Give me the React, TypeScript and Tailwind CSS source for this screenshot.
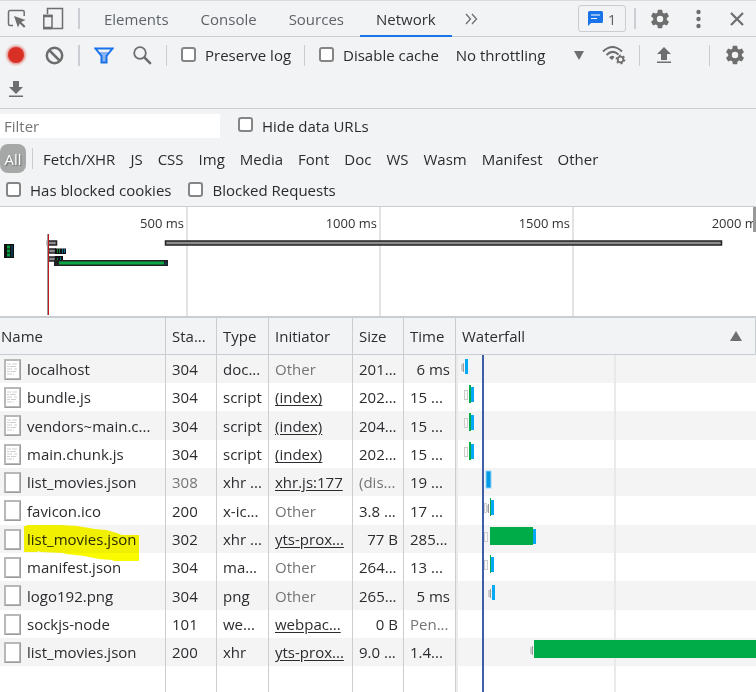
import { clsx } from 'clsx';

type Bar = { kind: 'queue' | 'stall' | 'wait' | 'load' | 'fetch'; x: number; w: number };

interface RequestRow {
  name: string;
  status: string;
  type: string;
  initiator: string;
  size: string;
  time: string;
  text?: boolean;
  muted?: boolean;
  marked?: boolean;
  bars: Bar[];
}

const scriptBars: Bar[] = [
  { kind: 'queue', x: 8, w: 4 },
  { kind: 'load', x: 14, w: 4 },
  { kind: 'wait', x: 13, w: 2 },
];

const requests: RequestRow[] = [
  {
    name: 'localhost', status: '304', type: 'doc...', initiator: 'Other', size: '201...', time: '6 ms', text: true,
    bars: [{ kind: 'stall', x: 5, w: 3 }, { kind: 'load', x: 9, w: 3 }],
  },
  { name: 'bundle.js', status: '304', type: 'script', initiator: '(index)', size: '202...', time: '15 ...', text: true, bars: scriptBars },
  { name: 'vendors~main.c...', status: '304', type: 'script', initiator: '(index)', size: '204...', time: '15 ...', text: true, bars: scriptBars },
  { name: 'main.chunk.js', status: '304', type: 'script', initiator: '(index)', size: '202...', time: '15 ...', text: true, bars: scriptBars },
  {
    name: 'list_movies.json', status: '308', type: 'xhr ...', initiator: 'xhr.js:177', size: '(dis...', time: '19 ...', muted: true,
    bars: [{ kind: 'fetch', x: 30, w: 5 }],
  },
  {
    name: 'favicon.ico', status: '200', type: 'x-ic...', initiator: 'Other', size: '3.8 ...', time: '17 ...',
    bars: [{ kind: 'queue', x: 28, w: 3 }, { kind: 'stall', x: 31, w: 2 }, { kind: 'load', x: 35, w: 3 }, { kind: 'wait', x: 34, w: 1 }],
  },
  {
    name: 'list_movies.json', status: '302', type: 'xhr ...', initiator: 'yts-prox...', size: '77 B', time: '285...', marked: true,
    bars: [{ kind: 'queue', x: 28, w: 4 }, { kind: 'load', x: 77, w: 3 }, { kind: 'wait', x: 34, w: 43 }],
  },
  {
    name: 'manifest.json', status: '304', type: 'ma...', initiator: 'Other', size: '264...', time: '13 ...',
    bars: [{ kind: 'queue', x: 28, w: 4 }, { kind: 'load', x: 35, w: 3 }, { kind: 'wait', x: 34, w: 1 }],
  },
  {
    name: 'logo192.png', status: '304', type: 'png', initiator: 'Other', size: '265...', time: '5 ms',
    bars: [{ kind: 'stall', x: 32, w: 3 }, { kind: 'load', x: 36, w: 3 }],
  },
  { name: 'sockjs-node', status: '101', type: 'we...', initiator: 'webpac...', size: '0 B', time: 'Pen...', bars: [] },
  {
    name: 'list_movies.json', status: '200', type: 'xhr', initiator: 'yts-prox...', size: '9.0 ...', time: '1.4...',
    bars: [{ kind: 'stall', x: 74, w: 3 }, { kind: 'wait', x: 78, w: 900 }],
  },
];

const tabs = ['Elements', 'Console', 'Sources', 'Network'];
const types = ['Fetch/XHR', 'JS', 'CSS', 'Img', 'Media', 'Font', 'Doc', 'WS', 'Wasm', 'Manifest', 'Other'];

function Divider({ wide = false }: { wide?: boolean }) {
  return <span className={clsx('h-[21px] shrink-0 bg-[#cacdd1]', wide ? 'w-[2px]' : 'w-px')} />;
}

function Check({ label }: { label: string }) {
  return (
    <label className="flex items-center gap-[9px] whitespace-nowrap">
      <input
        type="checkbox"
        className="relative -top-px size-[15px] appearance-none rounded-[3px] border-2 border-[#858585] bg-white checked:bg-[#1a73e8]"
      />
      {label}
    </label>
  );
}

function GearIcon() {
  return (
    <svg width="22" height="22" viewBox="0 0 24 24" fill="#6e6e6e">
      <path d="M19.43 12.98c.04-.32.07-.64.07-.98s-.03-.66-.07-.98l2.11-1.65c.19-.15.24-.42.12-.64l-2-3.46c-.12-.22-.39-.3-.61-.22l-2.49 1c-.52-.4-1.08-.73-1.69-.98l-.38-2.65A.488.488 0 0 0 14 2h-4c-.25 0-.46.18-.49.42l-.38 2.65c-.61.25-1.17.59-1.69.98l-2.49-1c-.23-.09-.49 0-.61.22l-2 3.46c-.13.22-.07.49.12.64l2.11 1.65c-.04.32-.07.65-.07.98s.03.66.07.98l-2.11 1.65c-.19.15-.24.42-.12.64l2 3.46c.12.22.39.3.61.22l2.49-1c.52.4 1.08.73 1.69.98l.38 2.65c.03.24.24.42.49.42h4c.25 0 .46-.18.49-.42l.38-2.65c.61-.25 1.17-.59 1.69-.98l2.49 1c.23.09.49 0 .61-.22l2-3.46c.12-.22.07-.49-.12-.64l-2.11-1.65zM12 15.5A3.5 3.5 0 1 1 12 8.500a3.500 3.500 0 0 1 0 7z" />
    </svg>
  );
}

function ArrowIcon({ up = false }: { up?: boolean }) {
  return (
    <svg width="14" height="16" viewBox="0 0 14 16" fill="#6e6e6e">
      {up ? <path d="M7 0 14 7H10V13H4V7H0Z" /> : <path d="M4 0H10V6H14L7 13 0 6H4Z" />}
      <rect y="14.500" width="14" height="1.500" />
    </svg>
  );
}

function FileIcon({ text }: { text?: boolean }) {
  return (
    <svg width="17" height="21" viewBox="0 0 17 21" className="shrink-0">
      <rect x="1" y="1" width="15" height="19" fill="#fff" stroke="#b8b8b8" strokeWidth="2" />
      <path d="M16.500 1V20.500H1" fill="none" stroke="#9c9c9c" />
      {text && (
        <path
          d="M3 5H7M8 5H13M3 7.500H5M6 7.500H12M3 10H8M10 10H13M3 12.500H6M7 12.500H12M3 15H8M9 15H10"
          stroke="#cfcfcf"
        />
      )}
    </svg>
  );
}

function TabBar() {
  return (
    <div className="flex h-[37px] items-center border-t border-b border-[#cacdd1] border-t-[#d9dbde] text-[#5f6368]">
      <button aria-label="Inspect element" className="ml-[7px]">
        <svg width="20" height="20" viewBox="0 0 20 20" fill="none" stroke="#6e6e6e" strokeWidth="1.500">
          <path d="M17.200 7V3a1.500 1.500 0 0 0-1.500-1.500H3A1.500 1.500 0 0 0 1.500 3v12A1.500 1.500 0 0 0 3 16.500H6" />
          <path d="M7 7 18.500 11 14.200 13 18.500 17.300 17 18.800 12.700 14.500 11 18.500Z" fill="#6e6e6e" stroke="none" />
        </svg>
      </button>
      <button aria-label="Toggle device toolbar" className="ml-[15px]">
        <svg width="22" height="23" viewBox="0 0 22 23" fill="none" stroke="#6e6e6e">
          <path d="M5.500 7V1.500H20.500V21.500H11" strokeWidth="1.500" />
          <rect x="1.800" y="8.500" width="8.200" height="13" strokeWidth="1.500" />
          <path d="M1 9H10.500M1 21H10.500" strokeWidth="2.500" />
        </svg>
      </button>
      <span className="ml-[14px] flex"><Divider wide /></span>
      <nav className="ml-2 flex self-stretch">
        {tabs.map((tab) => (
          <button
            key={tab}
            className={clsx(
              'relative px-4',
              tab === 'Network' && 'text-[#333] after:absolute after:inset-x-0 after:-bottom-px after:h-[2px] after:bg-[#1a73e8]'
            )}
          >
            {tab}
          </button>
        ))}
      </nav>
      <button aria-label="More tabs" className="ml-[13px]">
        <svg width="13" height="12" viewBox="0 0 13 12" fill="none" stroke="#6e6e6e" strokeWidth="1.300">
          <path d="M1 1 5.500 6 1 11M7 1 11.500 6 7 11" />
        </svg>
      </button>
      <div className="ml-auto flex items-center">
        <button className="flex h-[27px] w-12 items-center justify-center gap-[5px] rounded-[3px] border border-[#cacdd1]">
          <svg width="15" height="15" viewBox="0 0 15 15">
            <path d="M1.500 0H13.500A1.500 1.500 0 0 1 15 1.500V10.500A1.500 1.500 0 0 1 13.500 12H3L0 15V1.500A1.500 1.500 0 0 1 1.500 0Z" fill="#1a73e8" />
            <path d="M3 4H12M3 7.500H9" stroke="#fff" strokeWidth="1.200" />
          </svg>
          1
        </button>
        <span className="ml-2 flex"><Divider wide /></span>
        <button aria-label="Settings" className="ml-[13px]"><GearIcon /></button>
        <button aria-label="Customize" className="ml-[25px]">
          <svg width="5" height="20" viewBox="0 0 5 20" fill="#6e6e6e">
            <circle cx="2.500" cy="3" r="2.200" />
            <circle cx="2.500" cy="10" r="2.200" />
            <circle cx="2.500" cy="17" r="2.200" />
          </svg>
        </button>
        <button aria-label="Close" className="ml-[29px] mr-3">
          <svg width="14" height="14" viewBox="0 0 14 14" stroke="#6e6e6e" strokeWidth="2.200">
            <path d="M1 1 13 13M13 1 1 13" />
          </svg>
        </button>
      </div>
    </div>
  );
}

function Toolbar() {
  return (
    <div className="border-b border-[#cacdd1] pb-[10px]">
      <div className="flex h-9 items-center">
        <button aria-label="Stop recording" className="ml-[5px]">
          <svg width="22" height="22" viewBox="0 0 22 22" fill="#d93025">
            <circle cx="11" cy="11" r="11" opacity=".12" />
            <circle cx="11" cy="11" r="9.500" opacity=".3" />
            <circle cx="11" cy="11" r="8" />
          </svg>
        </button>
        <button aria-label="Clear" className="ml-[18px]">
          <svg width="19" height="19" viewBox="0 0 19 19" fill="none" stroke="#6e6e6e" strokeWidth="2.500">
            <circle cx="9.500" cy="9.500" r="7.700" />
            <path d="M4 4 15 15" />
          </svg>
        </button>
        <span className="ml-[14px] flex"><Divider wide /></span>
        <button aria-label="Filter" className="ml-[14px]">
          <svg width="20" height="17" viewBox="0 0 20 17" fill="none" stroke="#1a73e8" strokeWidth="2">
            <path d="M4 5H16L12 9V15H8V9Z" fill="#8ab4f0" stroke="none" />
            <path d="M1.500 1.500H18.500L12.500 9V15.500H7.500V9Z" />
          </svg>
        </button>
        <button aria-label="Search" className="ml-[19px]">
          <svg width="19" height="19" viewBox="0 0 19 19" fill="none" stroke="#6e6e6e">
            <circle cx="7" cy="7" r="5.800" strokeWidth="1.800" />
            <path d="M11 11 17.800 17.800" strokeWidth="2.500" />
          </svg>
        </button>
        <span className="mx-[14px] flex"><Divider /></span>
        <Check label="Preserve log" />
        <span className="ml-[13px] mr-[14px] flex"><Divider /></span>
        <Check label="Disable cache" />
        <div className="relative ml-[17px] flex w-[128px] items-center">
          <select aria-label="Throttling" className="w-full appearance-none bg-transparent">
            <option>No throttling</option>
          </select>
          <svg width="10" height="9" viewBox="0 0 10 9" fill="#6e6e6e" className="pointer-events-none absolute right-0">
            <path d="M0 0H10L5 9Z" />
          </svg>
        </div>
        <div className="ml-auto flex shrink-0 items-center">
          <button aria-label="Network conditions">
            <svg width="24" height="20" viewBox="0 0 24 20" fill="none" stroke="#6e6e6e">
              <path d="M1 6.500Q10.500-2.500 20 6.500M4.500 10Q10.500 4 16.500 9.500" strokeWidth="2" />
              <path d="M7 12.500Q10 9.500 12.500 12L10 15Z" fill="#6e6e6e" stroke="none" />
              <circle cx="18.500" cy="14.500" r="2.800" strokeWidth="1.800" />
              <circle cx="18.500" cy="14.500" r="4.200" strokeWidth="1.400" strokeDasharray="2 2.400" />
            </svg>
          </button>
          <span className="ml-[13px] mr-[17px] flex"><Divider /></span>
          <button aria-label="Import HAR"><ArrowIcon up /></button>
          <span className="ml-[38px] mr-[14px] flex"><Divider /></span>
          <button aria-label="Network settings" className="mr-[10px]"><GearIcon /></button>
        </div>
      </div>
      <div className="flex h-[25px] items-end pb-px pl-[9px]">
        <button aria-label="Export HAR"><ArrowIcon /></button>
      </div>
    </div>
  );
}

function FilterBar() {
  return (
    <div className="border-b border-[#cacdd1]">
      <div className="flex h-8 items-center gap-[18px] pt-px">
        <input aria-label="Filter" placeholder="Filter" className="h-6 w-[220px] bg-white px-1 placeholder:text-[#757575]" />
        <Check label="Hide data URLs" />
      </div>
      <div className="flex h-[35px] items-center">
        <button className="h-[29px] w-[26px] rounded-lg bg-[#a6a8a7] text-white [text-shadow:1px_1px_1px_#666]">All</button>
        <span className="ml-[6px] mr-[10px] flex"><Divider /></span>
        <div className="flex gap-[15px]">
          {types.map((type) => (
            <button key={type}>{type}</button>
          ))}
        </div>
      </div>
      <div className="flex h-[30px] items-center gap-[17px] pb-[2px] pl-[6px]">
        <Check label="Has blocked cookies" />
        <Check label="Blocked Requests" />
      </div>
    </div>
  );
}

function Overview() {
  return (
    <div className="relative h-[109px] overflow-hidden bg-white">
      <div className="flex h-full text-right text-[13px] text-[#333]">
        <div className="w-[188px] shrink-0 border-r-2 border-[#e3e3e3] pt-[6px] pr-[2px]">500 ms</div>
        <div className="w-[193px] shrink-0 border-r-2 border-[#e3e3e3] pt-[6px] pr-[2px]">1000 ms</div>
        <div className="w-[193px] shrink-0 border-r-2 border-[#e3e3e3] pt-[6px] pr-[2px]">1500 ms</div>
        <div className="w-[193px] shrink-0 border-r-2 border-[#e3e3e3] pt-[6px] pr-[2px]">2000 ms</div>
      </div>
      <svg className="absolute inset-0 h-full w-full">
        <g fill="#8c8c8c" stroke="#222" strokeWidth="1.500">
          <rect x="47.500" y="34" width="9" height="4" />
          <rect x="165.500" y="34" width="556" height="4" />
          <rect x="48.500" y="42" width="7" height="4" />
          <rect x="48.500" y="50" width="7" height="4" />
        </g>
        <rect x="4" y="37" width="10" height="14" fill="#111" />
        <path d="M7 40H10M7 44H10M7 48H10" stroke="#00a040" strokeWidth="3" />
        <path d="M12 38V50" stroke="#075985" />
        <path d="M55 41.500H66V47H55ZM55 49H63V55H55Z" fill="#111" />
        <path d="M57.500 42V46M59.500 42V46M57.500 51V54" stroke="#15803d" />
        <path d="M62.500 42V46M64.500 42V46M60.500 50V54" stroke="#0369a1" />
        <rect x="54" y="53" width="114" height="6" fill="#222" />
        <path d="M59 56H164" stroke="#0aa846" strokeWidth="3" />
        <path d="M166 55V58" stroke="#075985" />
        <path d="M47.500 27V108" stroke="#999" />
        <path d="M48.500 27V108" stroke="#c5161d" />
      </svg>
      <span className="absolute top-0 right-0 h-[25px] w-[3px] bg-[#999]" />
    </div>
  );
}

function WaterfallCell({ bars }: { bars: Bar[] }) {
  return (
    <td className="relative overflow-hidden p-0">
      <svg className="absolute inset-0 h-full w-full">
        <rect width="2" height="100%" fill="#ebebeb" />
        <rect x="158" width="2" height="100%" fill="#e9e9e9" />
        {bars.map(({ kind, x, w }) => {
          switch (kind) {
            case 'queue':
              return <rect key={kind} x={x + 0.5} y="7.500" width={w - 1} height="9" fill="#fafafa" stroke="#ccc" />;
            case 'stall':
              return (
                <g key={kind}>
                  <rect x={x} y="9" width={w} height="7" fill="#ccc" />
                  <rect x={x + w - 1} y="8" width="1" height="9" fill="#999" />
                </g>
              );
            case 'wait':
              return <rect key={kind} x={x} y="2" width={w} height="18" fill="#00ac47" />;
            case 'load':
              return <rect key={kind} x={x} y="4" width={w} height="15" fill="#03a9f4" />;
            default:
              return <rect key={kind} x={x} y="3" width={w} height="17" fill="#039be5" stroke="#8fd3f7" />;
          }
        })}
        <rect x="26" width="2" height="100%" fill="#3f5ea8" />
      </svg>
    </td>
  );
}

const cell = 'overflow-hidden whitespace-nowrap border-r border-[#cacdd1] pl-[6px] pr-[5px] py-0';

function RequestTable() {
  return (
    <table className="h-full w-full table-fixed border-separate border-spacing-0 bg-white text-left">
      <colgroup>
        <col className="w-[166px]" />
        <col className="w-[51px]" />
        <col className="w-[52px]" />
        <col className="w-[84px]" />
        <col className="w-[51px]" />
        <col className="w-[52px]" />
        <col />
      </colgroup>
      <thead className="bg-[#f1f3f4]">
        <tr className="h-[37px] [&>th]:border-b [&>th]:font-normal">
          <th className="border-r border-[#cacdd1] py-0 pl-px">Name</th>
          <th className={cell}>Sta...</th>
          <th className={cell}>Type</th>
          <th className={cell}>Initiator</th>
          <th className={cell}>Size</th>
          <th className={cell}>Time</th>
          <th className={cell}>
            <div className="flex items-center justify-between pr-2">
              Waterfall
              <svg width="12" height="10" viewBox="0 0 12 10" fill="#6e6e6e"><path d="M6 0 12 10H0Z" /></svg>
            </div>
          </th>
        </tr>
      </thead>
      <tbody>
        {requests.map((r, i) => (
          <tr key={i} className="h-[28px] odd:bg-[#f4f4f4] nth-[3n]:h-[29px]">
            <td className="relative border-r border-[#cacdd1] py-0 pl-1">
              <div className="flex items-center gap-[6px] whitespace-nowrap">
                <FileIcon text={r.text} />
                {r.name}
              </div>
              {r.marked && (
                <svg width="116" height="37" viewBox="0 0 116 37" className="absolute top-0 left-6 z-10 mix-blend-multiply">
                  <path d="M0 1H3V0H36L53 1 71 4 82 5 93 8 98 10H115V36H90L88 35 75 34 60 31 42 29 39 28 16 27 15 26 13 27H0Z" fill="#fbfb00" />
                </svg>
              )}
            </td>
            <td className={clsx(cell, r.muted && 'text-[#757575]')}>{r.status}</td>
            <td className={cell}>{r.type}</td>
            <td className={cell}>
              {r.initiator === 'Other' ? (
                <span className="text-[#757575]">Other</span>
              ) : (
                <a href="#" className="underline underline-offset-2">{r.initiator}</a>
              )}
            </td>
            <td className={clsx(cell, r.size.endsWith('B') && 'text-right', r.muted && 'text-[#757575]')}>{r.size}</td>
            <td className={clsx(cell, r.time.endsWith('ms') && 'text-right', r.time === 'Pen...' && 'text-[#757575]')}>{r.time}</td>
            <WaterfallCell bars={r.bars} />
          </tr>
        ))}
        <tr>
          {tabs.concat('size', 'time').map((key) => (
            <td key={key} className={cell} />
          ))}
          <WaterfallCell bars={[]} />
        </tr>
      </tbody>
    </table>
  );
}

export default function App() {
  return (
    <div className="flex h-screen flex-col overflow-hidden bg-[#f1f3f4] font-['Open_Sans',sans-serif] text-[15px] leading-5 text-[#2b2c2f]">
      <TabBar />
      <Toolbar />
      <FilterBar />
      <Overview />
      <div className="min-h-0 flex-1 border-t-2 border-[#cacdd1]">
        <RequestTable />
      </div>
    </div>
  );
}
